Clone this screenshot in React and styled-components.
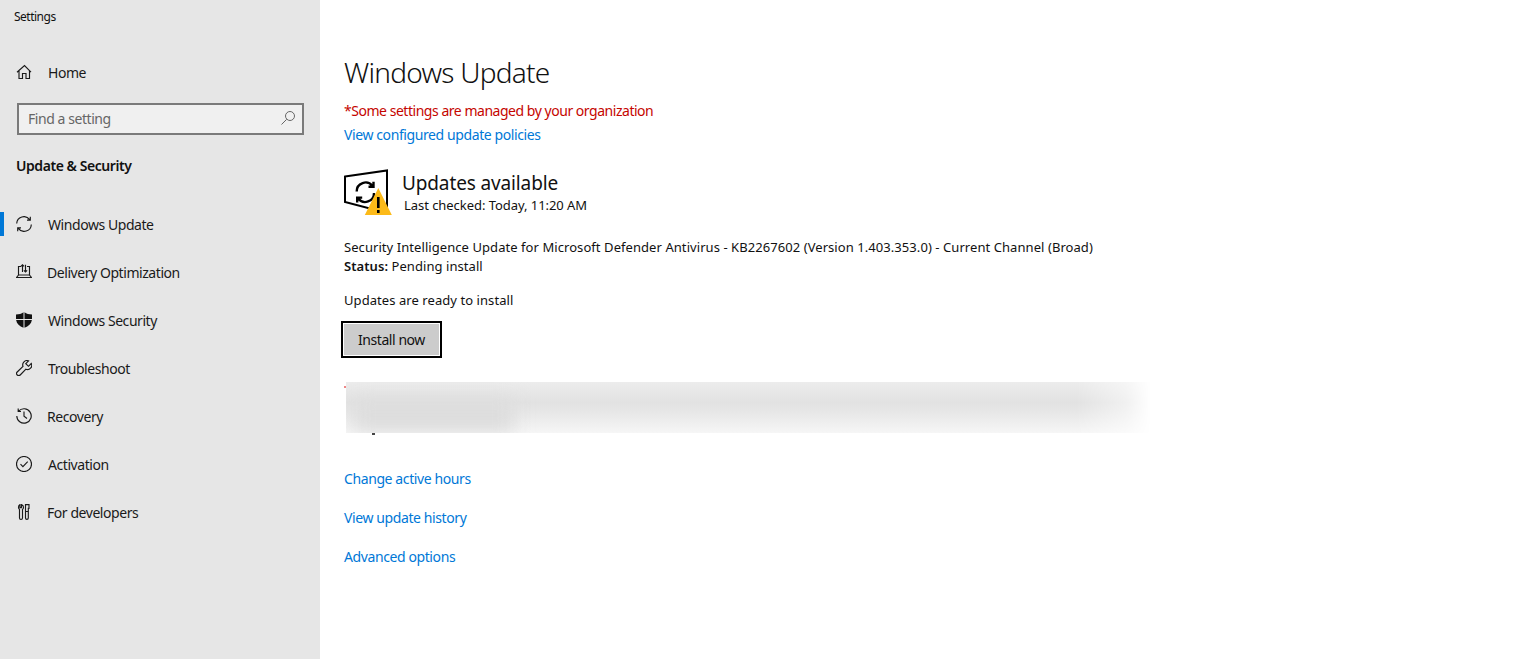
import React from "react";
import styled, { createGlobalStyle } from "styled-components";

const GlobalStyle = createGlobalStyle`
  html, body {
    margin: 0;
    padding: 0;
    background: #fff;
    font-family: "Noto Sans", "Open Sans", "Liberation Sans", sans-serif;
    color: #000;
  }
`;

const Page = styled.div`
  display: flex;
  width: 100%;
  height: 659px;
  overflow: hidden;
`;

const Sidebar = styled.aside`
  width: 320px;
  flex: none;
  background: #e6e6e6;
  display: flex;
  flex-direction: column;
`;

const AppTitle = styled.div`
  height: 48px;
  line-height: 33px;
  padding-left: 14px;
  font-size: 12px;
  letter-spacing: -0.5px;
  color: #111;
`;

const NavItem = styled.div`
  position: relative;
  height: 48px;
  display: flex;
  align-items: center;
  padding-left: 16px;
  font-size: 14px;
  letter-spacing: -0.44px;
  color: #1a1a1a;
  ${p => p.$active && `
    &::before {
      content: "";
      position: absolute;
      left: 0;
      top: 12px;
      width: 4px;
      height: 24px;
      background: #0078d7;
    }
  `}
`;

const NavIcon = styled.svg`
  width: 16px;
  height: 16px;
  flex: none;
  margin-right: ${p => p.$gap || 16}px;
  fill: none;
  stroke: #1a1a1a;
  stroke-width: 1.15;
`;

const SearchBox = styled.div`
  margin: 7px 16px 0 17px;
  height: 32px;
  box-sizing: border-box;
  border: 2px solid #7a7a7a;
  background: #f0f0f0;
  display: flex;
  align-items: center;
  justify-content: space-between;
  padding: 0 6px 2px 9px;
  font-size: 14px;
  letter-spacing: -0.44px;
  color: #666;
`;

const SectionLabel = styled.div`
  margin: 17px 0 0 16px;
  height: 30px;
  line-height: 28px;
  font-size: 14px;
  font-weight: 600;
  letter-spacing: -0.44px;
  color: #111;
`;

const NavList = styled.nav`
  margin-top: 18px;
`;

const Main = styled.main`
  flex: 1;
  padding: 52px 0 0 24px;
`;

const Title = styled.h1`
  margin: 0;
  height: 40px;
  line-height: 40px;
  font-size: 28px;
  font-weight: 300;
  letter-spacing: -0.74px;
  color: #111;
`;

const Managed = styled.div`
  margin-top: 7px;
  height: 24px;
  line-height: 24px;
  font-size: 14px;
  letter-spacing: -0.47px;
  color: #c50500;
`;

const Link = styled.a`
  display: block;
  height: 24px;
  line-height: 24px;
  font-size: 14px;
  letter-spacing: -0.4px;
  color: #0078d7;
`;

const StatusRow = styled.div`
  margin-top: 22px;
  height: 48px;
  display: flex;
`;

const StatusIcon = styled.svg`
  width: 48px;
  height: 48px;
  flex: none;
`;

const StatusText = styled.div`
  margin-left: 10px;
  display: flex;
  flex-direction: column;
`;

const StatusHeading = styled.div`
  height: 27px;
  line-height: 28px;
  font-size: 19px;
  letter-spacing: -0.13px;
  color: #111;
`;

const StatusSub = styled.div`
  margin-left: 2px;
  height: 20px;
  line-height: 18px;
  font-size: 13px;
  letter-spacing: -0.05px;
  color: #111;
`;

const Line = styled.div`
  height: 19px;
  line-height: 19px;
  font-size: 13px;
  letter-spacing: 0.065px;
  color: #111;
  margin-top: ${p => p.$top || 0}px;
`;

const Strong = styled.b`
  font-weight: 600;
`;

const InstallButton = styled.button`
  display: block;
  margin: 11px 0 0 -3px;
  width: 101px;
  height: 37px;
  box-sizing: border-box;
  border: 2px solid #000;
  outline: 1px solid #fff;
  outline-offset: -3px;
  background: #ccc;
  padding: 0;
  font-family: inherit;
  font-size: 14px;
  letter-spacing: -0.44px;
  color: #111;
`;

const RedactedWrap = styled.div`
  position: relative;
  margin: 24px 0 0 2px;
  width: 830px;
  height: 51px;

  /* what is left of the text the blur did not cover */
  &::before {
    content: "";
    position: absolute;
    left: -2px;
    top: 4px;
    width: 2px;
    height: 2px;
    background: #e88;
  }
  &::after {
    content: "";
    position: absolute;
    left: 26px;
    top: 51px;
    width: 3px;
    height: 2px;
    background: #444;
  }
`;

const RedactedArea = styled.div`
  position: relative;
  height: 100%;
  overflow: hidden;
  background: linear-gradient(to bottom, #ececec 0%, #e2e2e2 40%, #e8e8e8 62%, #f6f6f6 100%);
  -webkit-mask-image: linear-gradient(to right, #000 0, #000 88%, rgba(0, 0, 0, 0.5) 94%, transparent 97%);
  mask-image: linear-gradient(to right, #000 0, #000 88%, rgba(0, 0, 0, 0.5) 94%, transparent 97%);
`;

const Smear = styled.div`
  position: absolute;
  left: 8px;
  top: 16px;
  width: 160px;
  height: 34px;
  background: #dddddd;
  filter: blur(9px);
`;

const Links = styled.div`
  margin-top: 34px;
  display: flex;
  flex-direction: column;
  gap: 15px;
`;

const Home = () => (
  <NavIcon viewBox="0 0 16 16">
    <path d="M1 8.2 8.500 1.600l6.500 6.600M3 6.500V14.500h3.500V9.500h3.500v5H13.500V6.500" />
  </NavIcon>
);

const Sync = () => (
  <NavIcon viewBox="0 0 16 16">
    <path d="M.7 7.600A7.200 7.200 0 0 1 13.700 3.600M15.300 8.400A7.200 7.200 0 0 1 2.300 12.400M14.300 .8v3.300H11M1.700 15.200v-3.300H5" />
  </NavIcon>
);

const Delivery = () => (
  <NavIcon viewBox="0 0 16 16" $gap={15}>
    <path d="M5 2.500H2.500V11L.5 13.500h15L13.500 11V2.500H11M2.500 11h11M6.500 8V.8M4.900 2.400 6.500 .8l1.600 1.600M9.500 .8V8M7.900 6.400 9.500 8l1.600-1.600" />
  </NavIcon>
);

const Shield = () => (
  <NavIcon viewBox="0 0 16 16">
    <path fill="#111" stroke="none" d="M7.500 .2C5.600 1.500 3 2.500 0 2.500V7h7.500zM8.500 .2c1.900 1.300 4.500 2.300 7.500 2.300V7H8.500zM.1 8h7.400v7.800C3.500 14.500.8 11.800.1 8zM8.500 8h7.400c-.7 3.800-3.400 6.500-7.400 7.800z" />
  </NavIcon>
);

const Wrench = () => (
  <NavIcon viewBox="0 0 16 16">
    <path d="M15.300 3.500 12.500 6.300 9.800 3.700 12.500 .9A4.200 4.200 0 0 0 7 6.300L1.200 12a2.100 2.100 0 0 0 3 3L9.900 9.200A4.200 4.200 0 0 0 15.300 3.500z" />
  </NavIcon>
);

const Recovery = () => (
  <NavIcon viewBox="0 0 16 16" $gap={15}>
    <path d="M2.600 3.200A7.200 7.200 0 1 1 .8 8M2.200 .6v2.900H5M8 3.500V8.300l3 2.200" />
  </NavIcon>
);

const Check = () => (
  <NavIcon viewBox="0 0 16 16">
    <circle cx="8" cy="8" r="7.500" />
    <path d="m4.500 8.200 2.400 2.400 4.800-5" />
  </NavIcon>
);

const Tools = () => (
  <NavIcon viewBox="0 0 16 16" $gap={15}>
    <path d="M4 .6v3h1.500V.6C7 1 7.500 2.200 7.500 3.300c0 1-.5 1.700-1 2.100v8.500a1.500 1.500 0 0 1-3 0V5.400c-.5-.4-1-1.100-1-2.100C2.500 2.200 3 1 4 .6zM9.500 .6h3.500v3.700h-.7v9.600a1.400 1.400 0 0 1-2.800 0V4.300zM9.500 7.500h2.800" />
  </NavIcon>
);

export default function App() {
  return (
    <Page>
      <GlobalStyle />
      <Sidebar>
        <AppTitle>Settings</AppTitle>
        <NavItem>
          <Home />
          Home
        </NavItem>
        <SearchBox>
          Find a setting
          <svg width="16" height="16" viewBox="0 0 16 16" fill="none" stroke="#666">
            <circle cx="10" cy="6" r="4.500" />
            <path d="M6.700 9.300 1.500 14.500" />
          </svg>
        </SearchBox>
        <SectionLabel>Update &amp; Security</SectionLabel>
        <NavList>
          <NavItem $active>
            <Sync />
            Windows Update
          </NavItem>
          <NavItem>
            <Delivery />
            Delivery Optimization
          </NavItem>
          <NavItem>
            <Shield />
            Windows Security
          </NavItem>
          <NavItem>
            <Wrench />
            Troubleshoot
          </NavItem>
          <NavItem>
            <Recovery />
            Recovery
          </NavItem>
          <NavItem>
            <Check />
            Activation
          </NavItem>
          <NavItem>
            <Tools />
            For developers
          </NavItem>
        </NavList>
      </Sidebar>
      <Main>
        <Title>Windows Update</Title>
        <Managed>*Some settings are managed by your organization</Managed>
        <Link>View configured update policies</Link>
        <StatusRow>
          <StatusIcon viewBox="0 0 48 48">
            <path d="M1 7.500 43 1.500V44L1 33z" fill="#fff" stroke="#000" strokeWidth="2" />
            <path d="M12.700 22.500a8.800 8.800 0 0 1 15.800-5.500M30 24a8.800 8.800 0 0 1-15.800 5.500M29.500 12.800v5h-5M13.200 33.600v-5h5" fill="none" stroke="#000" strokeWidth="2.400" />
            <path d="M34.300 19 47.800 46H20.800z" fill="#fcba19" />
            <path d="M33 28h2.600v11H33zM33 41h2.600v3H33z" fill="#000" />
          </StatusIcon>
          <StatusText>
            <StatusHeading>Updates available</StatusHeading>
            <StatusSub>Last checked: Today, 11:20 AM</StatusSub>
          </StatusText>
        </StatusRow>
        <Line $top={21}>
          Security Intelligence Update for Microsoft Defender Antivirus - KB2267602 (Version 1.403.353.0) - Current Channel (Broad)
        </Line>
        <Line>
          <Strong>Status:</Strong> Pending install
        </Line>
        <Line $top={15}>Updates are ready to install</Line>
        <InstallButton>Install now</InstallButton>
        <RedactedWrap>
          <RedactedArea>
            <Smear />
          </RedactedArea>
        </RedactedWrap>
        <Links>
          <Link>Change active hours</Link>
          <Link>View update history</Link>
          <Link>Advanced options</Link>
        </Links>
      </Main>
    </Page>
  );
}
